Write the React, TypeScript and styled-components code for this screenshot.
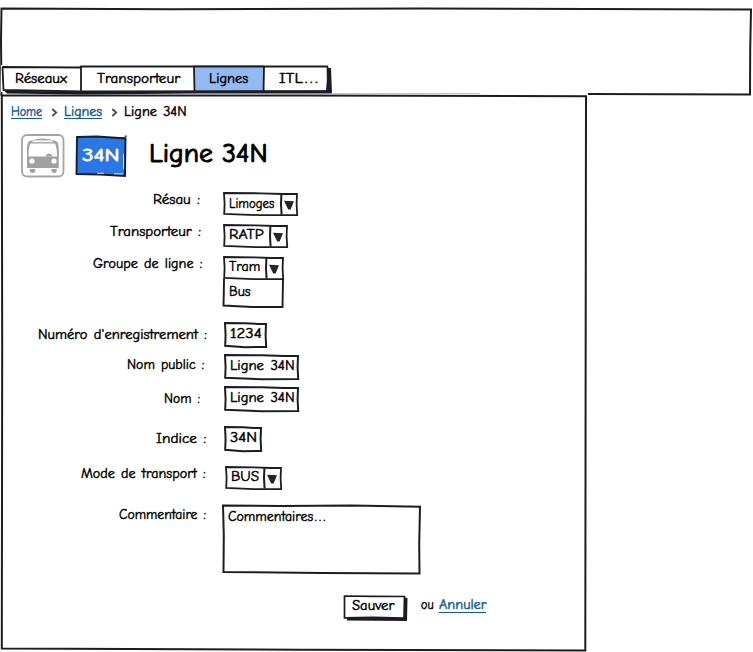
import React, { useLayoutEffect, useRef, useState } from "react";
import styled, { createGlobalStyle, css } from "styled-components";

const INK = "#1c1c24";

const GlobalStyle = createGlobalStyle`
  * { box-sizing: border-box; }
  body {
    margin: 0;
    background: #fff;
    color: #000;
    font-family: "Comic Sans MS", "Comic Neue", Inter, "Open Sans", sans-serif;
    font-feature-settings: "cv11", "ss03";
    font-size: 14px;
    font-weight: 500;
    line-height: 18px;
    word-spacing: 1.5px;
    -webkit-text-stroke: 0.45px currentColor;
  }
`;

/* ---------- lettering ---------- */

const Letters = styled.span<{ $w: number }>`
  display: block;
  flex: none;
  width: ${(p) => p.$w}px;
  white-space: nowrap;
`;

const Stretch = styled.span`
  display: inline-block;
  transform-origin: 0 50%;
`;

const Dots = styled.span`
  letter-spacing: 2.2px;
  margin-left: 1.5px;
`;

/** Text stretched horizontally so that it fills a given width. */
function Text({ w, dots = false, children }: { w: number; dots?: boolean; children: string }) {
  const ref = useRef<HTMLSpanElement>(null);
  const [scale, setScale] = useState(1);
  useLayoutEffect(() => {
    if (ref.current) setScale(w / ref.current.offsetWidth);
  }, [w, children]);
  return (
    <Letters $w={w}>
      <Stretch ref={ref} style={{ transform: `scaleX(${scale})` }}>
        {children}
        {dots && <Dots>...</Dots>}
      </Stretch>
    </Letters>
  );
}

/* ---------- hand-drawn outline ---------- */

const OutlineSvg = styled.svg`
  position: absolute;
  inset: 0;
  width: 100%;
  height: 100%;
  overflow: visible;
  pointer-events: none;
`;

function Outline({ d, width = 2 }: { d: string; width?: number }) {
  return (
    <OutlineSvg aria-hidden="true">
      <path d={d} fill="none" stroke={INK} strokeWidth={width} strokeLinecap="square" />
    </OutlineSvg>
  );
}

const wobble = (w: number, h: number, slope = 1.5) =>
  `M1 1 L${w * 0.5} 1.3 L${w * 0.8} 2 L${w - 1} ${0.7 + slope} L${w - 1.4} ${h * 0.5} L${w - 0.8} ${h - 1} L${
    w * 0.5
  } ${h - 0.8} L1.2 ${h - 2.2} L1.6 ${h * 0.5} Z`;

/* ---------- page frame ---------- */

const Page = styled.div`
  width: 753px;
  height: 652px;
  overflow: hidden;
  display: flex;
  flex-direction: column;
`;

const Header = styled.header`
  position: relative;
  height: 95px;
  padding: 65px 0 0 1px;
`;

const Tabs = styled.nav`
  position: relative;
  display: flex;
  width: 329px;
  height: 30px;
`;

const Tab = styled.a<{ $w: number; $pad: number; $active?: boolean }>`
  display: block;
  width: ${(p) => p.$w}px;
  height: 27px;
  padding: 5px 0 0 ${(p) => p.$pad}px;
  background: ${(p) => (p.$active ? "#94b8f1" : "#fff")};
`;

const Panel = styled.main`
  position: relative;
  width: 587px;
  height: 557px;
  padding-top: 8px;
`;

const Crumbs = styled.div`
  display: flex;
  align-items: flex-start;
  height: 16px;
  padding-left: 11px;
`;

const Link = styled.a`
  display: block;
  height: 16px;
  color: #12599c;
  text-decoration: none;
  box-shadow: 0 -1px 0 #12599c inset;
`;

const Chevron = styled.svg`
  width: 22px;
  height: 16px;
`;

const Heading = styled.div`
  display: flex;
  height: 43px;
  margin-top: 15px;
  padding-left: 21px;
`;

const BusIcon = styled.svg`
  width: 44px;
  height: 44px;
`;

const Badge = styled.div`
  position: relative;
  width: 52px;
  height: 43px;
  margin-left: 10px;
  padding: 12px 0 0 7px;
  background: linear-gradient(#2b77e5, #2b77e5) 2px 3px / 49px 38px no-repeat;
  color: #fff;
  font-size: 18px;
  line-height: 20px;
  -webkit-text-stroke-width: 0.8px;
`;

const Title = styled.h1`
  margin: 5px 0 0 22px;
  font-size: 26px;
  font-weight: 500;
  line-height: 30px;
  word-spacing: 0;
  -webkit-text-stroke-width: 1px;
`;

/* ---------- form ---------- */

const Form = styled.form`
  margin-top: 15px;
`;

const Row = styled.div<{ $h: number }>`
  display: grid;
  grid-template-columns: 222px 1fr;
  height: ${(p) => p.$h}px;
`;

const Label = styled.label<{ $end: number; $top: number }>`
  display: flex;
  justify-content: flex-end;
  margin-top: ${(p) => p.$top}px;
  padding-right: ${(p) => 222 - p.$end}px;
`;

const box = css<{ $w: number; $h: number; $pad?: number; $top?: number }>`
  position: relative;
  width: ${(p) => p.$w}px;
  height: ${(p) => p.$h}px;
  padding: ${(p) => p.$top ?? 3}px 0 0 ${(p) => p.$pad ?? 6}px;
`;

const FieldBox = styled.div<{ $w: number; $h: number; $pad?: number; $top?: number; $indent?: number }>`
  ${box}
  margin-left: ${(p) => p.$indent ?? 2}px;
`;

const SelectBox = styled(FieldBox)`
  display: flex;
`;

const Arrow = styled.svg<{ $x: number }>`
  position: absolute;
  left: ${(p) => p.$x}px;
  top: 0;
  width: 16px;
  height: 23px;
  overflow: visible;
`;

const Options = styled.div`
  position: relative;
  width: 62px;
  height: 29px;
  padding: 4px 0 0 7px;
`;

const Actions = styled.div`
  display: flex;
  align-items: flex-start;
  padding-left: 343px;
`;

const Button = styled.div`
  position: relative;
  width: 65px;
  height: 26px;
  padding: 2px 0 0 9px;
`;

const ButtonText = styled.span`
  position: relative;
  display: block;
`;

const Or = styled.div`
  display: flex;
  gap: 5px;
  margin: 1px 0 0 13px;
`;

const CancelLink = styled(Link)`
  height: 17px;
`;

function Select({ value, w, textW, split, indent = 1, top = 2 }: {
  value: string; w: number; textW: number; split: number; indent?: number; top?: number;
}) {
  return (
    <SelectBox $w={w} $h={23} $top={top} $pad={6} $indent={indent}>
      <Outline d={wobble(w, 24, 1.3)} width={1.8} />
      <Text w={textW}>{value}</Text>
      <Arrow $x={split} viewBox="0 0 16 23">
        <path d="M0.4 2 L0 12 L0.6 22.5" fill="none" stroke={INK} strokeWidth="2" />
        <path d="M3 8.8 L13 9.2 L9.6 17.5 L7.2 17.5 Z" fill="#25252b" />
      </Arrow>
    </SelectBox>
  );
}

function Input({ value, w, h, textW, pad = 6 }: { value: string; w: number; h: number; textW: number; pad?: number }) {
  return (
    <FieldBox $w={w} $h={h} $pad={pad}>
      <Outline d={wobble(w, h, 1.2)} width={2} />
      <Text w={textW}>{value}</Text>
    </FieldBox>
  );
}

function Field({ label, w, end, top, h, children }: {
  label: string; w: number; end: number; top: number; h: number; children: React.ReactNode;
}) {
  return (
    <Row $h={h}>
      <Label $end={end} $top={top}><Text w={w}>{label}</Text></Label>
      <div>{children}</div>
    </Row>
  );
}

function Separator() {
  return (
    <Chevron viewBox="0 0 22 16">
      <path d="M10.3 6 L14.2 9.5 L10.3 13.2" fill="none" stroke="#4a4a52" strokeWidth="1.8" />
    </Chevron>
  );
}

export default function App() {
  return (
    <Page>
      <GlobalStyle />
      <Header>
        <Outline d="M1.5 95 L1 40 L1.5 8.5 L170 9.2 L420 8.6 L751 9.5 L750.2 50 L750 94.5 L589 94" />
        <Tabs>
          <Tab $w={80} $pad={14}><Text w={52}>Réseaux</Text></Tab>
          <Tab $w={113} $pad={16}><Text w={83}>Transporteur</Text></Tab>
          <Tab $w={70} $pad={15} $active><Text w={39}>Lignes</Text></Tab>
          <Tab $w={65} $pad={15}><Text w={41} dots>ITL</Text></Tab>
          <OutlineSvg aria-hidden="true">
            <path d="M3 25.5 L80 27 L195 26 L325 25.5 L327 3 L330 3 L331 28.5 L195 28.5 L80 29.5 L6 28.5 Z" fill={INK} />
            <path
              d="M1 2 L79 2.5 L80 1.5 L327 1.5 M1.5 2 L2.5 25 L80 26.5 L327 26 L326.5 1.5 M80 2 V27 M193 2 L193.5 27 M263 2 L262.5 27"
              fill="none" stroke={INK} strokeWidth="1.8"
            />
          </OutlineSvg>
        </Tabs>
      </Header>
      <Panel>
        <Outline d="M1.8 0.5 L300 0.5 L586 1.2 L585.6 300 L585.3 555.5 L300 554.8 L1.8 553.5 L2.2 250 Z" />
        <OutlineSvg aria-hidden="true">
          <path d="M333 -1.5 H480" stroke="#c4c4c0" strokeWidth="1" />
        </OutlineSvg>
        <Crumbs>
          <Link href="#"><Text w={31}>Home</Text></Link>
          <Separator />
          <Link href="#"><Text w={38}>Lignes</Text></Link>
          <Separator />
          <Text w={63}>Ligne 34N</Text>
        </Crumbs>
        <Heading>
          <BusIcon viewBox="0 0 44 44">
            <rect x="1" y="1" width="41.5" height="41.5" rx="5" fill="#fff" stroke="#a5a5a5" strokeWidth="1.8" />
            <path d="M8.500 7 Q21.500 2 35 7 Q37.500 8 37.800 15 V34 H6 V15 Q6 8 8.500 7 Z" fill="#a1a1a1" />
            <path d="M11.500 6.300 H31.500 V8.200 H11.500 Z" fill="#f4f4f4" />
            <path d="M9.500 9.500 H34 Q36 13 36 22.500 H7.500 Q7.500 13 9.500 9.500 Z" fill="#fff" />
            <path d="M25 21 Q28 18 31 21 V22.500 H25 Z" fill="#a1a1a1" />
            <circle cx="11" cy="27" r="2.600" fill="#fff" />
            <circle cx="33" cy="27" r="2.600" fill="#fff" />
            <path d="M9 35 H14.200 V37.500 Q11.600 40.500 9 37.500 Z M30.500 35 H35.700 V37.500 Q33 40.500 30.500 37.500 Z" fill="#a1a1a1" />
          </BusIcon>
          <Badge>
            <Outline d="M2 3 L22 2.5 L50.500 4.500 L50 42 L25 40.500 L1.500 40 Z" width={1.9} />
            <OutlineSvg aria-hidden="true">
              <path d="M48.500 20 V35 M22 39.300 H29 M39 39.800 H48" stroke="#fff" strokeWidth="0.8" />
              <path d="M49.500 2.200 H52" stroke="#2b77e5" strokeWidth="1.5" />
            </OutlineSvg>
            <Text w={38}>34N</Text>
          </Badge>
          <Title><Text w={119}>Ligne 34N</Text></Title>
        </Heading>
        <Form>
          <Field label="Résau :" w={47} end={200} top={-1} h={32}>
            <Select value="Limoges" w={75} textW={45} split={58} top={3} />
          </Field>
          <Field label="Transporteur :" w={91} end={201} top={-1} h={32}>
            <Select value="RATP" w={65} textW={35} split={47} />
          </Field>
          <Field label="Groupe de ligne :" w={109} end={202} top={-1} h={66}>
            <Select value="Tram" w={61} textW={31} split={43} />
            <Options>
              <Outline d="M2 0.5 L1.800 14 L1.500 26.500 L30 28 L60.500 28 L61 1" width={1.9} />
              <Text w={22}>Bus</Text>
            </Options>
          </Field>
          <Field label="Numéro d'enregistrement :" w={169} end={207} top={4} h={32}>
            <Input value="1234" w={43} h={26} textW={32} />
          </Field>
          <Field label="Nom public :" w={77} end={204} top={2} h={32}>
            <Input value="Ligne 34N" w={75} h={26} textW={65} />
          </Field>
          <Field label="Nom :" w={36} end={200} top={4} h={40}>
            <Input value="Ligne 34N" w={75} h={26} textW={65} />
          </Field>
          <Field label="Indice :" w={50} end={206} top={4} h={40}>
            <Input value="34N" w={38} h={26} textW={27} />
          </Field>
          <Field label="Mode de transport :" w={125} end={206} top={-1} h={39}>
            <Select value="BUS" w={57} textW={28} split={39} indent={3} />
          </Field>
          <Field label="Commentaire :" w={87} end={206} top={1} h={90}>
            <FieldBox $w={198} $h={69} $pad={6} $indent={0}>
              <Outline d="M1 0.5 L60 1 L130 0.6 L198 1.8 L197.200 40 L197.500 68.500 L100 68 L1.500 67 L1.800 30 Z" />
              <Text w={100} dots>Commentaires</Text>
            </FieldBox>
          </Field>
          <Actions>
            <Button role="button">
              <OutlineSvg aria-hidden="true">
                <path d="M4 22 L61 22.5 L61.5 2.5 L64.5 3 L64 26 L4 25.5 Z" fill={INK} />
                <path d="M1.5 1 L30 1.3 L61.5 1.5 L61 23 L30 22.3 L1.5 22.8 Z" fill="#fff" stroke={INK} strokeWidth="1.7" />
              </OutlineSvg>
              <ButtonText><Text w={42}>Sauver</Text></ButtonText>
            </Button>
            <Or>
              <Text w={13}>ou</Text>
              <CancelLink href="#"><Text w={47}>Annuler</Text></CancelLink>
            </Or>
          </Actions>
        </Form>
      </Panel>
    </Page>
  );
}
